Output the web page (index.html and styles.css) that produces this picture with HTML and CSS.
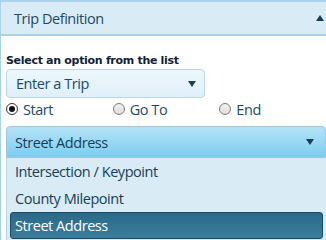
FILE: index.html
```html
<!DOCTYPE html>
<html>
<head>
<meta charset="utf-8">
<link rel="stylesheet" href="styles.css">
</head>
<body>
<div class="panel">
  <div class="header">
    <span class="title">Trip Definition</span>
    <span class="caret-up"></span>
  </div>
  <div class="content">
    <div class="label">Select an option from the list</div>
    <div class="select">
      <span>Enter a Trip</span>
      <span class="caret-down"></span>
    </div>
    <div class="radios">
      <label class="radio"><span class="dot checked"></span>Start</label>
      <label class="radio"><span class="dot"></span>Go To</label>
      <label class="radio"><span class="dot"></span>End</label>
    </div>
    <div class="combo">
      <div class="combo-head">
        <span>Street Address</span>
        <span class="caret-down"></span>
      </div>
      <ul class="list">
        <li>Intersection / Keypoint</li>
        <li>County Milepoint</li>
        <li class="selected">Street Address</li>
      </ul>
    </div>
  </div>
</div>
</body>
</html>
```
FILE: styles.css
```css
html, body { margin: 0; padding: 0; background: #fff; }
body { width: 326px; height: 240px; overflow: hidden; font-family: "Open Sans", sans-serif; color: #163f57; }
.panel { border-left: 1px solid #a9d3ea; height: 240px; box-sizing: border-box; }
.header { height: 32px; background: #d9ebf5; border-top: 2px solid #a9d3ea; border-bottom: 2px solid #a9d3ea; display: flex; align-items: center; justify-content: space-between; padding: 0 2px 0 13px; }
.title { font-size: 14.5px; color: #1d4a62; letter-spacing: -0.45px; }
.caret-up { width: 0; height: 0; border-left: 4px solid transparent; border-right: 4px solid transparent; border-bottom: 6px solid #143f58; }
.caret-down { width: 0; height: 0; border-left: 4px solid transparent; border-right: 4px solid transparent; border-top: 6px solid #143f58; }
.content { padding: 18px 0 0 5px; }
.label { font-family: "DejaVu Sans", sans-serif; font-weight: bold; font-size: 11px; color: #0f2236; line-height: 14px; letter-spacing: -0.3px; }
.select { width: 199px; height: 29px; box-sizing: border-box; margin-top: 1px; border: 1px solid #b8d8ea; border-radius: 4px; background: linear-gradient(#eef7fb, #dfeff8); display: flex; align-items: center; justify-content: space-between; padding: 0 8px 0 9px; font-size: 14.5px; color: #1d4a62; letter-spacing: -0.45px; }
.radios { display: flex; height: 20px; align-items: center; margin-top: 1px; font-size: 14.5px; color: #1d4a62; letter-spacing: -0.45px; }
.radio { display: flex; align-items: center; gap: 5px; width: 107px; }
.dot { width: 12px; height: 12px; border-radius: 50%; border: 1px solid #7b7b7b; background: linear-gradient(#f2f2f2, #dcdcdc); box-sizing: border-box; position: relative; }
.dot.checked { background: #fff; border-color: #333; }
.dot.checked::after { content: ""; position: absolute; left: 2px; top: 2px; width: 6px; height: 6px; border-radius: 50%; background: #111; }
.combo { margin-top: 7px; }
.combo-head { height: 32px; box-sizing: border-box; border: 1px solid #a3c6d9; border-radius: 4px 4px 0 0; background: linear-gradient(#b4e3f7, #7ccdf1); display: flex; align-items: center; justify-content: space-between; padding: 0 11px 0 8px; font-size: 14.5px; color: #163f57; letter-spacing: -0.45px; }
.list { list-style: none; margin: 0; padding: 0 3px 3px 3px; background: #d9ebf5; border-left: 1px solid #b8d5e4; }
.list li { height: 27px; display: flex; align-items: center; padding-left: 5px; font-size: 14.5px; color: #163f57; letter-spacing: -0.45px; }
.list li.selected { background: linear-gradient(#2a6a88, #3a7d9a); color: #fff; border: 1px solid #1b4a62; border-radius: 3px; padding-left: 4px; height: 27px; box-sizing: border-box; }
```
